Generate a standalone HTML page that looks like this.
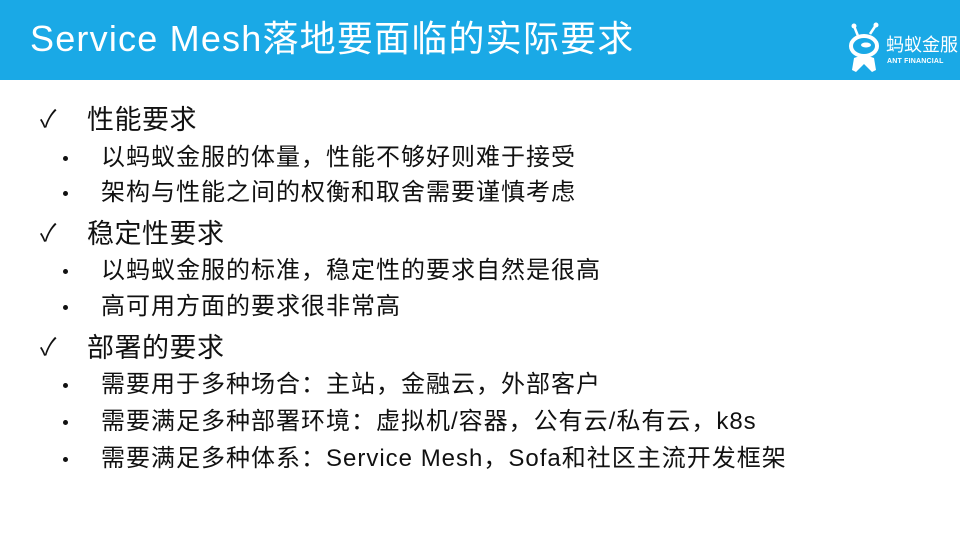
<!DOCTYPE html>
<html><head><meta charset="utf-8"><style>
body{margin:0;width:960px;height:540px;background:#fff;overflow:hidden;position:relative;font-family:"Liberation Sans","Noto Sans CJK SC",sans-serif;color:#111}
.hd{position:absolute;left:0;top:0;width:960px;height:80px;background:#1aa9e6}
.t{position:absolute;left:30px;top:16px;color:#fff;font-size:36px;line-height:46px;white-space:nowrap;letter-spacing:1.2px}
.l{position:absolute;white-space:nowrap;line-height:30px;transform:translateY(-15px)}
.a{left:87px;font-size:27px;letter-spacing:0.5px}
.b{left:101px;font-size:24px;letter-spacing:1px}
.ck{position:absolute;left:40px;font-size:24px;line-height:30px;transform:translateY(-15px)}
.dot{position:absolute;left:63px;width:5px;height:5px;border-radius:50%;background:#111;transform:translateY(-2px)}
</style></head><body>
<div class="hd"></div>
<div class="t">Service Mesh落地要面临的实际要求</div>
<svg style="position:absolute;left:846px;top:22px" width="40" height="56" viewBox="0 0 40 56">
<path d="M12 14 L8 4 M24 12 L30 3" stroke="#fff" stroke-width="2.5" fill="none"/>
<circle cx="8" cy="4" r="2.5" fill="#fff"/><circle cx="30" cy="3" r="2.5" fill="#fff"/>
<ellipse cx="18" cy="24" rx="13" ry="10" fill="none" stroke="#fff" stroke-width="4"/>
<ellipse cx="20" cy="23" rx="5" ry="2.5" fill="#fff"/>
<path d="M8 36 Q18 32 28 36 L30 48 L26 50 L18 42 L10 50 L6 48 Z" fill="#fff"/>
</svg>
<div style="position:absolute;left:886px;top:35px;color:#fff;font-size:18px;line-height:20px">蚂蚁金服</div>
<div style="position:absolute;left:887px;top:58px;color:#fff;font-size:7px;font-weight:bold;letter-spacing:0.2px">ANT FINANCIAL</div>

<div class="ck" style="top:120px">✓</div><div class="l a" style="top:120px">性能要求</div>
<div class="dot" style="top:158px"></div><div class="l b" style="top:158px">以蚂蚁金服的体量，性能不够好则难于接受</div>
<div class="dot" style="top:193px"></div><div class="l b" style="top:193px">架构与性能之间的权衡和取舍需要谨慎考虑</div>
<div class="ck" style="top:234px">✓</div><div class="l a" style="top:234px">稳定性要求</div>
<div class="dot" style="top:271px"></div><div class="l b" style="top:271px">以蚂蚁金服的标准，稳定性的要求自然是很高</div>
<div class="dot" style="top:307px"></div><div class="l b" style="top:307px">高可用方面的要求很非常高</div>
<div class="ck" style="top:348px">✓</div><div class="l a" style="top:348px">部署的要求</div>
<div class="dot" style="top:385px"></div><div class="l b" style="top:385px">需要用于多种场合：主站，金融云，外部客户</div>
<div class="dot" style="top:422px"></div><div class="l b" style="top:422px">需要满足多种部署环境：虚拟机/容器，公有云/私有云，k8s</div>
<div class="dot" style="top:459px"></div><div class="l b" style="top:459px">需要满足多种体系：Service Mesh，Sofa和社区主流开发框架</div>
</body></html>
